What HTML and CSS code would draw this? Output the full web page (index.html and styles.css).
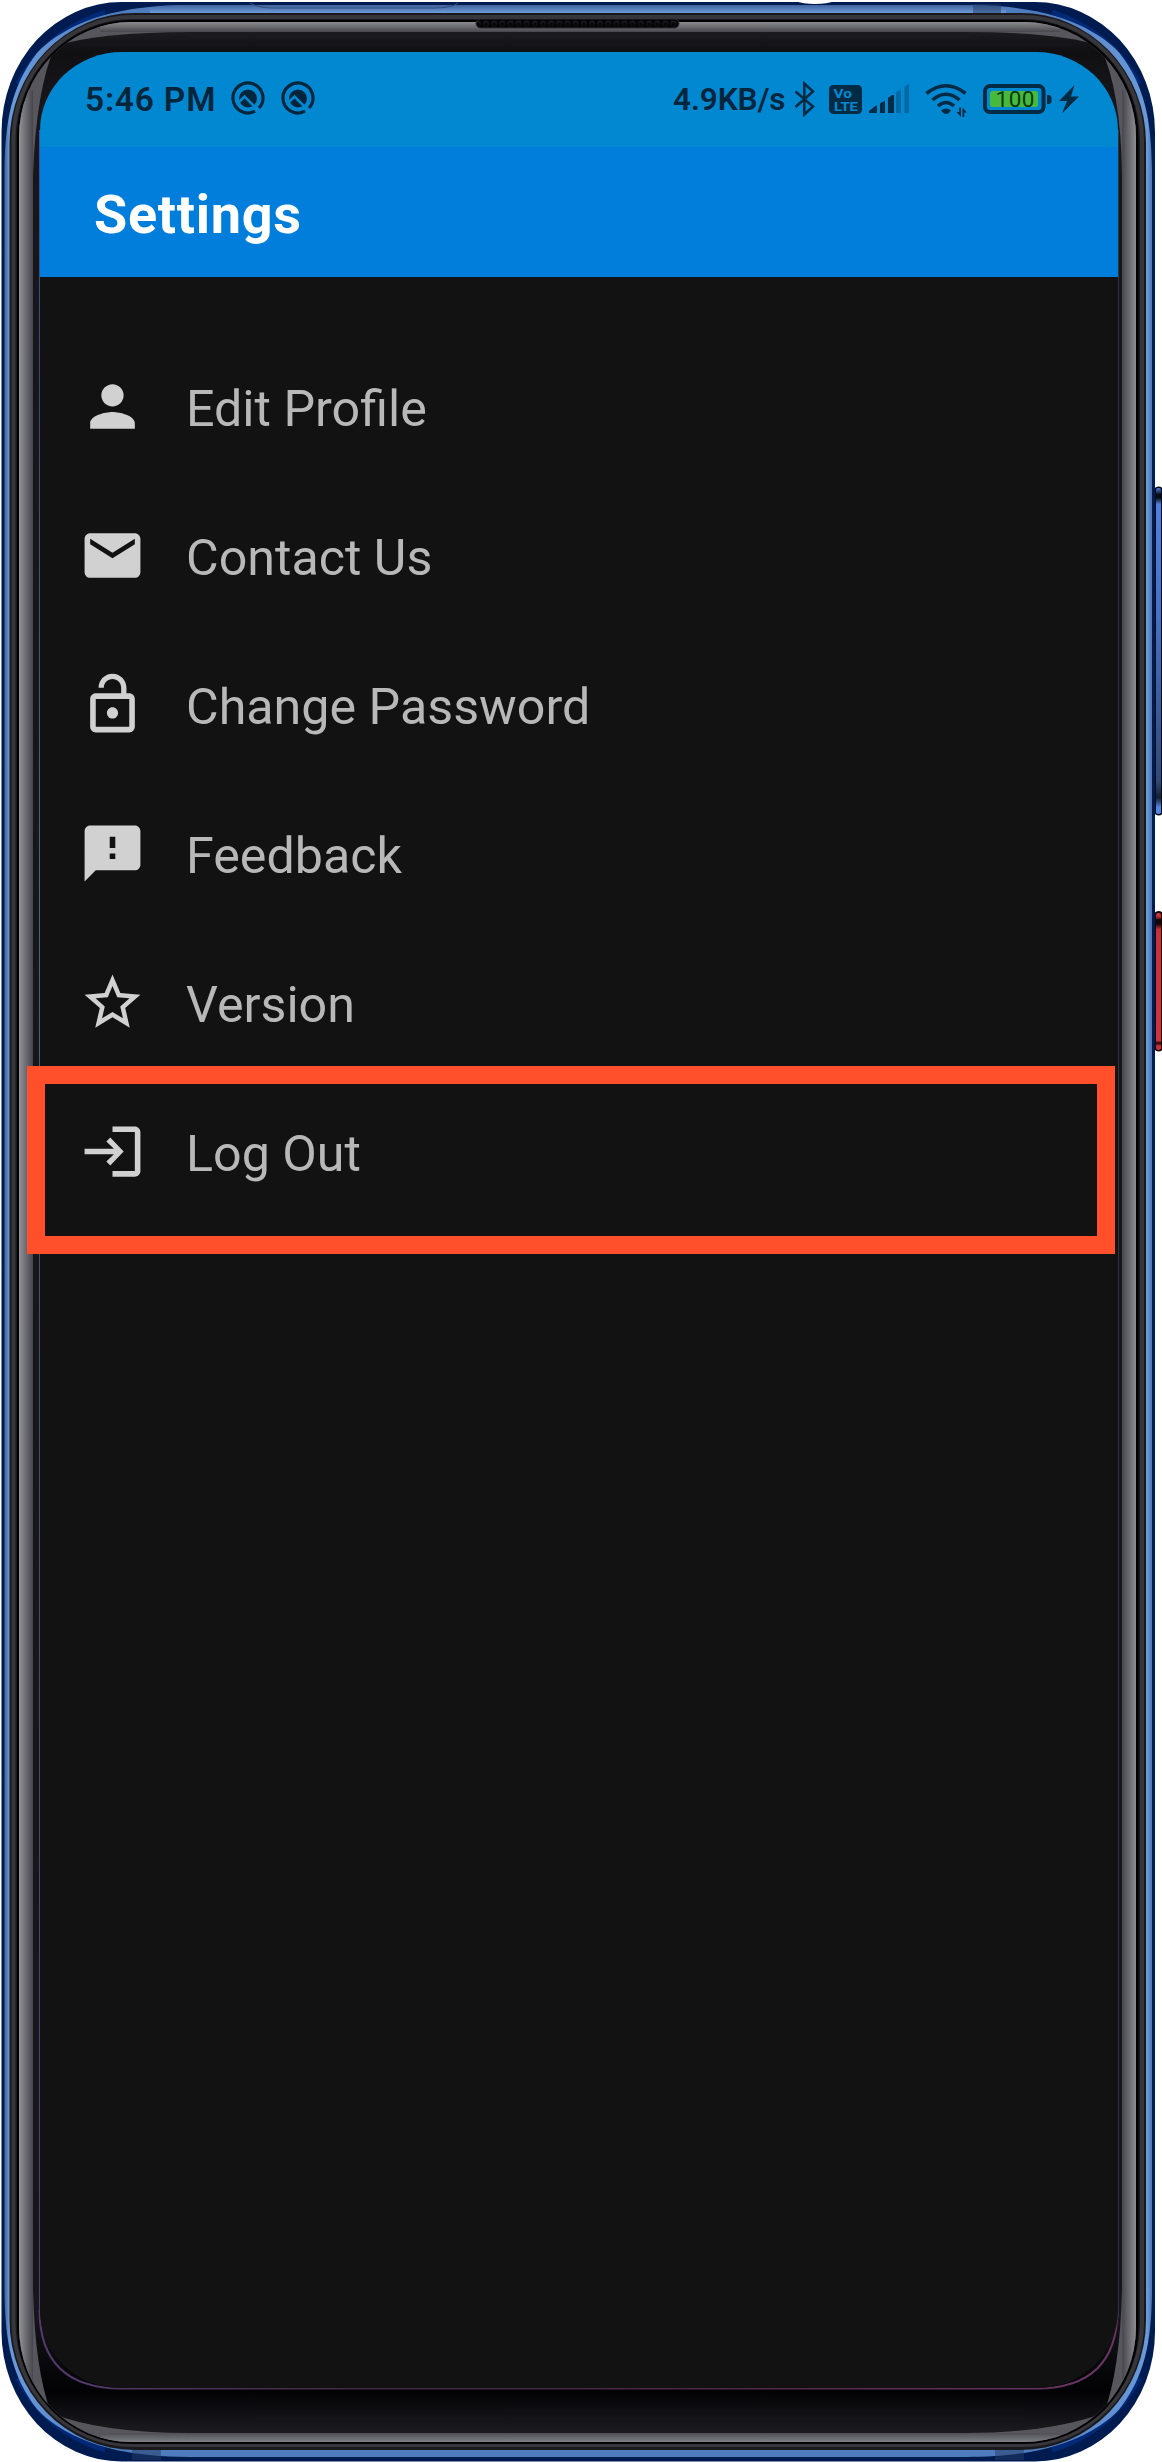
FILE: index.html
```html
<!DOCTYPE html>
<html lang="en">
<head>
<meta charset="utf-8">
<title>Settings</title>
<link rel="stylesheet" href="styles.css">
</head>
<body>
<div class="phone">
  <svg class="frame" viewBox="0 0 1162 2462" aria-hidden="true">
    <defs>
      <linearGradient id="key" x1="0" y1="0" x2="0" y2="1">
        <stop offset="0" stop-color="#4f7fdc"/><stop offset=".02" stop-color="#070b18"/><stop offset=".03" stop-color="#070b18"/><stop offset=".05" stop-color="#5080dc"/><stop offset=".4" stop-color="#4571c2"/><stop offset=".9" stop-color="#304a78"/><stop offset=".95" stop-color="#141f30"/><stop offset=".98" stop-color="#5486e0"/><stop offset="1" stop-color="#5486e0"/>
      </linearGradient>
      <linearGradient id="power" x1="0" y1="0" x2="0" y2="1">
        <stop offset="0" stop-color="#d8383f"/><stop offset=".03" stop-color="#b02c33"/><stop offset=".05" stop-color="#140506"/><stop offset=".08" stop-color="#140506"/><stop offset=".12" stop-color="#c8303a"/><stop offset=".93" stop-color="#cf343c"/><stop offset=".95" stop-color="#200708"/><stop offset=".97" stop-color="#c8303a"/><stop offset="1" stop-color="#c8303a"/>
      </linearGradient>
      <linearGradient id="blue" x1="5" x2="1152" y1="0" y2="0" gradientUnits="userSpaceOnUse">
        <stop offset="0" stop-color="#47689c"/><stop offset=".004" stop-color="#6b9ad9"/><stop offset=".1" stop-color="#4f7cbd"/><stop offset=".9" stop-color="#4f7cbd"/><stop offset=".996" stop-color="#6b9ad9"/><stop offset="1" stop-color="#4a72b0"/>
      </linearGradient>
      <linearGradient id="rimTop" x1="0" x2="0" y1="5" y2="13" gradientUnits="userSpaceOnUse">
        <stop offset="0" stop-color="#3f629c"/><stop offset="1" stop-color="#6d9bd8"/>
      </linearGradient>
      <linearGradient id="grayL" x1="19" x2="33" y1="0" y2="0" gradientUnits="userSpaceOnUse">
        <stop offset="0" stop-color="#929297"/><stop offset=".35" stop-color="#77777d"/><stop offset="1" stop-color="#46454d"/>
      </linearGradient>
      <linearGradient id="grayR" x1="1123" x2="1136" y1="0" y2="0" gradientUnits="userSpaceOnUse">
        <stop offset="0" stop-color="#4b4a52"/><stop offset="1" stop-color="#8b8c90"/>
      </linearGradient>
      <linearGradient id="grayT" x1="0" x2="0" y1="22" y2="32" gradientUnits="userSpaceOnUse">
        <stop offset="0" stop-color="#8b8c90"/><stop offset="1" stop-color="#47474d"/>
      </linearGradient>
      <linearGradient id="grayB" x1="0" x2="0" y1="2433" y2="2442" gradientUnits="userSpaceOnUse">
        <stop offset="0" stop-color="#4e4e54"/><stop offset="1" stop-color="#7f8084"/>
      </linearGradient>
      <linearGradient id="bezel" x1="0" x2="0" y1="32" y2="2433" gradientUnits="userSpaceOnUse">
        <stop offset="0" stop-color="#1c1b20"/><stop offset=".008" stop-color="#101013"/><stop offset=".03" stop-color="#17161b"/><stop offset=".95" stop-color="#17161b"/><stop offset=".982" stop-color="#020204"/><stop offset="1" stop-color="#1c1b20"/>
      </linearGradient>
      <linearGradient id="edge" x1="0" x2="1" y1="0" y2="0">
        <stop offset="0" stop-color="#533a6e"/><stop offset=".3" stop-color="#3d2a42"/><stop offset=".6" stop-color="#4a2646"/><stop offset="1" stop-color="#6b3465"/>
      </linearGradient>
      <linearGradient id="edgeL" x1="0" x2="0" y1="130" y2="2310" gradientUnits="userSpaceOnUse">
        <stop offset="0" stop-color="#3d4fa8"/><stop offset=".12" stop-color="#3b4768"/><stop offset=".35" stop-color="#466774"/><stop offset=".55" stop-color="#3f4f62"/><stop offset="1" stop-color="#543a70"/>
      </linearGradient>
      <pattern id="mesh" x="482" y="19" width="8.150" height="9" patternUnits="userSpaceOnUse">
        <rect width="8.150" height="9" fill="#030304"/><circle cx="4" cy="4.500" r="3" fill="#1a1a1d"/><circle cx="4" cy="5.500" r="2.200" fill="#08080a"/>
      </pattern>
      <clipPath id="ring"><rect x="19" y="22" width="1117" height="2420" rx="112" ry="115"/></clipPath>
    </defs>
    <rect x="1153" y="486.500" width="11" height="329" rx="6" fill="#060a14"/>
    <rect x="1156" y="488" width="5" height="326" rx="2" fill="url(#key)"/>
    <rect x="1153" y="911" width="11" height="140.500" rx="6" fill="#120606"/>
    <rect x="1156" y="913" width="5" height="137" rx="2" fill="url(#power)"/>
    <rect x="1.500" y="2" width="1153.500" height="2459.500" rx="120" ry="130" fill="#001b50"/>
    <path d="M18 84Q45 32 105 12" fill="none" stroke="#002a78" stroke-width="5"/>
    <path d="M1139 84Q1112 32 1052 12" fill="none" stroke="#002a78" stroke-width="5"/>
    <path d="M18 2378Q45 2431 105 2450" fill="none" stroke="#002a78" stroke-width="5"/>
    <path d="M1139 2378Q1112 2431 1052 2450" fill="none" stroke="#002a78" stroke-width="5"/>
    <path d="M4.500 170C5 120 12 85 37 53C50 39 62 33 73 27C95 16 130 5 190 5H966.500C1026.500 5 1061.500 16 1083.500 27C1094.500 33 1106.500 39 1119.500 53C1144.500 85 1151.500 120 1152 170V2292C1151.500 2342 1144.500 2377 1119.500 2409C1106.500 2423 1094.500 2429 1083.500 2435C1061.500 2446 1026.500 2457 966.500 2457H190C130 2457 95 2446 73 2435C62 2429 50 2423 37 2409C12 2377 5 2342 4.500 2292Z" fill="url(#blue)"/>
    <path d="M150 13V8Q165 5 190 5H966Q990 5 1006 8V13Z" fill="url(#rimTop)"/>
    <path d="M973 4h28v10h-28zM132 2449h29v11h-29zM995 2449h29v11h-29z" fill="#253c66" opacity=".5"/>
    <path d="M250 3q8 5 24 5h160q18 0 24-5" fill="none" stroke="#354d78"/>
    <path d="M795 1h40q-8 3-20 3t-20-3z" fill="#fff"/>
    <rect x="9.500" y="13" width="1136.500" height="2437" rx="125" ry="130" fill="#19191d"/>
    <rect x="13.500" y="17" width="1128.500" height="2428" rx="119" ry="123" fill="none" stroke="#36363b" stroke-width="4"/>
    <rect x="17" y="20" width="1121.500" height="2424" rx="115" ry="118" fill="#020203"/>
    <g clip-path="url(#ring)">
      <rect x="19" y="22" width="1117" height="2420" fill="#56565c"/>
      <rect x="19" y="90" width="14" height="2290" fill="url(#grayL)"/>
      <rect x="1122" y="90" width="14" height="2290" fill="url(#grayR)"/>
      <rect x="100" y="22" width="960" height="10" fill="url(#grayT)"/>
      <rect x="100" y="2433" width="960" height="9" fill="url(#grayB)"/>
      <path d="M33 175Q36 90 55 46Q100 32 190 32H965Q1060 32 1100 46Q1121 90 1122 175V2290Q1120 2370 1104 2413Q1050 2433 965 2433H190Q100 2433 51 2413Q35 2370 33 2290Z" fill="url(#bezel)"/>
    </g>
    <rect x="476" y="19" width="203" height="9" rx="4.500" fill="url(#mesh)" stroke="#303034"/>
    <path d="M39.500 2310Q40 2388 121 2388.500H1037Q1117 2388 1117.500 2310" fill="none" stroke="url(#edge)" stroke-width="2"/>
    <path d="M39.700 130V2312" stroke="url(#edgeL)" stroke-width="1.500"/>
    <path d="M1118.500 130V2318" stroke="#30333c" stroke-width="1"/>
  </svg>

  <main class="screen">
    <header class="status">
      <span class="time">5:46 PM</span>
      <svg class="quick" width="34" height="36" viewBox="0 0 34 36"><path d="M24 30.200A15 15 0 1 1 28.100 27" fill="none" stroke="currentColor" stroke-width="3.200"/><circle cx="17" cy="17.500" r="9" fill="currentColor"/><path class="cut" d="M6.500 22.500L13.500 15.500 26 28"/></svg>
      <svg class="quick" width="34" height="36" viewBox="0 0 34 36"><path d="M24 30.200A15 15 0 1 1 28.100 27" fill="none" stroke="currentColor" stroke-width="3.200"/><circle cx="17" cy="17.500" r="9" fill="currentColor"/><path class="cut" d="M6.500 22.500L13.500 15.500 26 28"/></svg>
      <div class="indicators">
        <span class="speed">4.9KB/s</span>
        <svg class="bt" width="22" height="36" viewBox="0 0 22 36"><path d="M1.500 10.500L19 25.500 10.300 33.500V2.500L19 10.500 1.500 26" fill="none" stroke="currentColor" stroke-width="2.600"/></svg>
        <svg class="volte" width="33" height="36" viewBox="0 0 33 36"><rect y="4" width="33" height="29" rx="4.500" fill="currentColor"/><text x="4.500" y="16.500" font-size="13" textLength="18.500" lengthAdjust="spacingAndGlyphs">Vo</text><text x="5" y="29.500" font-size="13.500" textLength="24" lengthAdjust="spacingAndGlyphs">LTE</text></svg>
        <svg class="signal" width="40" height="36" viewBox="0 0 40 36"><path d="M0 32v-2l7-5.500h1V32zM11 22.500l4-2.500h1v12h-5zM19 17l4-3h2v18h-6z" fill="currentColor"/><path d="M27 11.500l4-3h1V32h-5zM35.500 5.500l4-2.500h.5v29h-4.500z" fill="#0369a5"/></svg>
        <svg class="wifi" width="43" height="36" viewBox="0 0 43 36"><path d="M1.500 12.500Q21-3 40.500 12.500M7.500 19Q21 7.500 34.500 19M13 25Q21 18 29 25" fill="none" stroke="currentColor" stroke-width="3.600"/><path d="M16 29.500q5-4 10 0l-2.500 2.700q-2.500 1.600-5 0zM34.200 26.500h1.800V36L31.500 31h2.700zM37.500 36V26.500L42 31.500h-2.700V36z" fill="currentColor"/></svg>
        <svg class="battery" width="69" height="36" viewBox="0 0 69 36"><rect x="2" y="5" width="58.500" height="26" rx="5" fill="none" stroke="currentColor" stroke-width="4"/><rect x="7" y="10" width="48" height="16" rx="2.500" fill="#46ba3c"/><path d="M64 14h1.500q3 0 3 3v3q0 3-3 3H64z" fill="currentColor"/><text x="12.500" y="26.300" font-size="22.500" textLength="39">100</text></svg>
        <svg class="bolt" width="20" height="36" viewBox="0 0 20 36"><path d="M15.500 4L0 20h8L3 32.500 20 15.500h-8z" fill="currentColor"/></svg>
      </div>
    </header>
    <h1 class="appbar">Settings</h1>
    <nav class="menu">
      <a class="item"><svg class="icon" viewBox="0 0 24 24"><path d="M12 12c2.210 0 4-1.790 4-4s-1.790-4-4-4-4 1.790-4 4 1.790 4 4 4zm0 2c-2.670 0-8 1.340-8 4v2h16v-2c0-2.660-5.330-4-8-4z"/></svg><span>Edit Profile</span></a>
      <a class="item"><svg class="icon" viewBox="0 0 24 24"><path d="M20 4H4c-1.100 0-2 .9-2 2v12c0 1.100.9 2 2 2h16c1.100 0 2-.9 2-2V6c0-1.100-.9-2-2-2zm0 4l-8 5-8-5V6l8 5 8-5v2z"/></svg><span>Contact Us</span></a>
      <a class="item"><svg class="icon" viewBox="0 0 24 24"><path d="M12 17c1.100 0 2-.9 2-2s-.9-2-2-2-2 .9-2 2 .9 2 2 2zm6-9h-1V6c0-2.760-2.240-5-5-5S7 3.240 7 6h1.900c0-1.710 1.390-3.100 3.100-3.100s3.100 1.390 3.100 3.100v2H6c-1.100 0-2 .9-2 2v10c0 1.100.9 2 2 2h12c1.100 0 2-.9 2-2V10c0-1.100-.9-2-2-2zm0 12H6V10h12v10z"/></svg><span>Change Password</span></a>
      <a class="item"><svg class="icon" viewBox="0 0 24 24"><path d="M20 2H4c-1.100 0-1.990.9-1.990 2L2 22l4-4h14c1.100 0 2-.9 2-2V4c0-1.100-.9-2-2-2zm-7 12h-2v-2h2v2zm0-4h-2V6h2v4z"/></svg><span>Feedback</span></a>
      <a class="item"><svg class="icon" viewBox="0 0 24 24"><path d="M22 9.240l-7.190-.62L12 2 9.190 8.630 2 9.240l5.460 4.730L5.820 21 12 17.270 18.180 21l-1.630-7.030L22 9.240zM12 15.400l-3.760 2.270 1-4.280-3.320-2.880 4.380-.38L12 6.100l1.710 4.040 4.380.38-3.320 2.880 1 4.280L12 15.400z"/></svg><span>Version</span></a>
      <a class="item"><svg class="icon" viewBox="0 0 24 24"><path d="M12 3h8c1.100 0 2 .9 2 2v14c0 1.100-.9 2-2 2h-8v-2h8V5h-8zM9.800 8.400L11.200 7l4.800 5-4.800 5-1.400-1.400L12.500 13H2v-2h10.500z"/></svg><span>Log Out</span><i class="highlight"></i></a>
    </nav>
  </main>
</div>
</body>
</html>
```
FILE: styles.css
```css
body {
  margin: 0;
  background: #fff;
  font-family: Roboto, "Liberation Sans", sans-serif;
}

.phone {
  position: relative;
  box-sizing: border-box;
  width: 1162px;
  height: 2462px;
  padding: 52px 44px 74px 40px;
  overflow: hidden;
}

.frame {
  position: absolute;
  inset: 0;
  width: 1162px;
  height: 2462px;
}

.screen {
  position: relative;
  display: flex;
  flex-direction: column;
  height: 2336px;
  background: #121212;
  border-radius: 82px 82px 80px 80px / 78px;
}

.status {
  display: flex;
  align-items: flex-start;
  box-sizing: border-box;
  height: 95px;
  padding: 29px 39px 0 45px;
  background: #0288d1;
  border-radius: 82px 82px 0 0 / 78px 78px 0 0;
  color: #002b45;
  line-height: 38px;
}

.status svg {
  flex: none;
}

.time {
  width: 146px;
  font-size: 33.5px;
  font-weight: 600;
  letter-spacing: 0.8px;
  color: #01263c;
  white-space: nowrap;
}

.quick {
  margin-right: 16px;
  color: #01263c;
}

.cut {
  fill: none;
  stroke: #0288d1;
  stroke-width: 2.6px;
}

.indicators {
  display: flex;
  margin-left: auto;
}

.speed {
  width: 121px;
  font-size: 31.5px;
  font-weight: 600;
  letter-spacing: -0.1px;
  color: #01263c;
  white-space: nowrap;
}

.volte {
  margin-left: 13px;
}

.volte text {
  fill: #0288d1;
  font-weight: 700;
}

.signal {
  margin-left: 7px;
}

.wifi {
  margin-left: 16px;
}

.battery {
  margin-left: 15px;
}

.battery text {
  fill: #0c3a16;
  font-weight: 400;
}

.bolt {
  margin-left: 7px;
}

.appbar {
  box-sizing: border-box;
  height: 130px;
  margin: 0;
  padding-left: 54px;
  background: #017edb;
  color: #fff;
  font-size: 54px;
  font-weight: 700;
  letter-spacing: 0.7px;
  line-height: 136px;
}

.menu {
  padding-top: 54.5px;
}

.item {
  position: relative;
  display: flex;
  align-items: center;
  height: 149px;
  padding-left: 38.5px;
  color: #b8b8b8;
  font-size: 50.2px;
}

.item span {
  margin-left: 40.5px;
  padding-top: 4px;
}

.icon {
  width: 67px;
  height: 67px;
  fill: #d1d1d1;
}

.highlight {
  position: absolute;
  top: -10.5px;
  left: -13px;
  box-sizing: border-box;
  width: 1088px;
  height: 188px;
  border: 18px solid #ff4f2b;
}
```
